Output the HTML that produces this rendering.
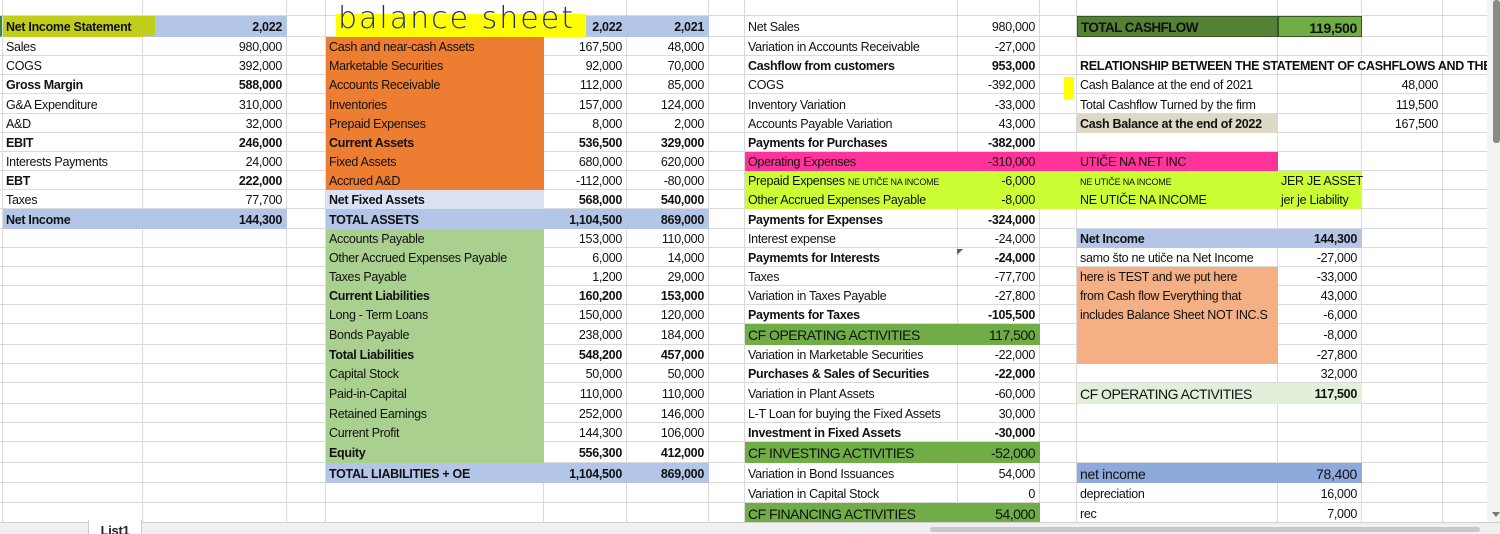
<!DOCTYPE html>
<html><head><meta charset="utf-8">
<style>
*{margin:0;padding:0;box-sizing:border-box}
body{width:1500px;height:534px;overflow:hidden;background:#fff;position:relative;font-family:"Liberation Sans",sans-serif;font-size:12.5px;letter-spacing:-0.3px;color:#111}
table{position:absolute;left:0;top:0;border-collapse:separate;border-spacing:0;table-layout:fixed;width:1487px}
td{border-right:1px solid #dadada;border-bottom:1px solid #dadada;white-space:nowrap;overflow:visible;padding:2px 3px 0 3px;vertical-align:middle;line-height:14px}
td.r{text-align:right;padding-right:4px}
.b{font-weight:bold}
.bl{background:#b4c6e7;border-color:#b4c6e7}
.lb{background:#d9e1f2;border-color:#d9e1f2}
.or{background:#ed7d31;border-color:#ed7d31}
.gr{background:#a9d08e;border-color:#a9d08e}
.pk{background:#ff3399;border-color:#ff3399}
.li{background:#ccff33;border-color:#ccff33}
.cf{background:#70ad47;border-color:#70ad47;font-size:14px;letter-spacing:-0.5px}
.dg{background:#548235;border:1px solid #375623;font-size:13.5px;font-weight:bold;letter-spacing:-0.6px;color:#111}
.lg2{background:#70ad47;border:1px solid #375623;font-size:14px;font-weight:bold}
.be{background:#ddd9c4;border-color:#ddd9c4}
.sa{background:#f4b084;border-color:#f4b084}
.pg{background:#e2efda;border-color:#e2efda}
.nb{background:#8ea9db;border-color:#8ea9db;font-size:14px}
.sm{font-size:9px;letter-spacing:-0.2px}
</style></head><body>
<table>
<colgroup><col style="width:3px"><col style="width:140px"><col style="width:144px"><col style="width:39px"><col style="width:218px"><col style="width:83px"><col style="width:82px"><col style="width:36px"><col style="width:213px"><col style="width:82px"><col style="width:37px"><col style="width:201px"><col style="width:84px"><col style="width:81px"><col style="width:45px"></colgroup>
<tr style="height:16px"><td style="padding:0"></td><td></td><td></td><td></td><td></td><td></td><td></td><td></td><td></td><td></td><td></td><td></td><td></td><td></td><td></td></tr>
<tr style="height:21px"><td style="padding:0;border-left:2px solid #3a8a3a"></td><td class="b" style="background:#c2cf1a;border-color:#c2cf1a">Net Income Statement</td><td class="bl b r" style="background:linear-gradient(to right,#c2cf1a 0 12px,#b4c6e7 12px)">2,022</td><td></td><td></td><td class="bl b r">2,022</td><td class="bl b r">2,021</td><td></td><td>Net Sales</td><td class="r">980,000</td><td></td><td class="dg">TOTAL CASHFLOW</td><td class="lg2 r">119,500</td><td></td><td></td></tr>
<tr style="height:19px"><td></td><td>Sales</td><td class="r">980,000</td><td></td><td class="or">Cash and near-cash Assets</td><td class="r">167,500</td><td class="r">48,000</td><td></td><td>Variation in Accounts Receivable</td><td class="r">-27,000</td><td></td><td></td><td></td><td></td><td></td></tr>
<tr style="height:19px"><td></td><td>COGS</td><td class="r">392,000</td><td></td><td class="or">Marketable Securities</td><td class="r">92,000</td><td class="r">70,000</td><td></td><td class="b">Cashflow from customers</td><td class="r b">953,000</td><td></td><td class="b">RELATIONSHIP BETWEEN THE STATEMENT OF CASHFLOWS AND THE</td><td></td><td></td><td></td></tr>
<tr style="height:19px"><td></td><td class="b">Gross Margin</td><td class="r b">588,000</td><td></td><td class="or">Accounts Receivable</td><td class="r">112,000</td><td class="r">85,000</td><td></td><td>COGS</td><td class="r">-392,000</td><td></td><td>Cash Balance at the end of 2021</td><td></td><td class="r">48,000</td><td></td></tr>
<tr style="height:20px"><td></td><td>G&amp;A Expenditure</td><td class="r">310,000</td><td></td><td class="or">Inventories</td><td class="r">157,000</td><td class="r">124,000</td><td></td><td>Inventory Variation</td><td class="r">-33,000</td><td></td><td>Total Cashflow Turned by the firm</td><td></td><td class="r">119,500</td><td></td></tr>
<tr style="height:19px"><td></td><td>A&amp;D</td><td class="r">32,000</td><td></td><td class="or">Prepaid Expenses</td><td class="r">8,000</td><td class="r">2,000</td><td></td><td>Accounts Payable Variation</td><td class="r">43,000</td><td></td><td class="be b">Cash Balance at the end of 2022</td><td></td><td class="r">167,500</td><td></td></tr>
<tr style="height:19px"><td></td><td class="b">EBIT</td><td class="r b">246,000</td><td></td><td class="or b">Current Assets</td><td class="r b">536,500</td><td class="r b">329,000</td><td></td><td class="b">Payments for Purchases</td><td class="r b">-382,000</td><td></td><td></td><td></td><td></td><td></td></tr>
<tr style="height:19px"><td></td><td>Interests Payments</td><td class="r">24,000</td><td></td><td class="or">Fixed Assets</td><td class="r">680,000</td><td class="r">620,000</td><td></td><td class="pk">Operating Expenses</td><td class="pk r">-310,000</td><td class="pk"></td><td class="pk">UTIČE NA NET INC</td><td></td><td></td><td></td></tr>
<tr style="height:19px"><td></td><td class="b">EBT</td><td class="r b">222,000</td><td></td><td class="or">Accrued A&amp;D</td><td class="r">-112,000</td><td class="r">-80,000</td><td></td><td class="li">Prepaid Expenses <span class="sm">NE UTIČE NA INCOME</span></td><td class="li r">-6,000</td><td class="li"></td><td class="li"><span class="sm">NE UTIČE NA INCOME</span></td><td class="li">JER JE ASSET</td><td></td><td></td></tr>
<tr style="height:19px"><td></td><td>Taxes</td><td class="r">77,700</td><td></td><td class="lb b">Net Fixed Assets</td><td class="r b">568,000</td><td class="r b">540,000</td><td></td><td class="li">Other Accrued Expenses Payable</td><td class="li r">-8,000</td><td class="li"></td><td class="li">NE UTIČE NA INCOME</td><td class="li">jer je Liability</td><td></td><td></td></tr>
<tr style="height:20px"><td></td><td class="bl b">Net Income</td><td class="bl b r">144,300</td><td></td><td class="bl b">TOTAL ASSETS</td><td class="bl b r">1,104,500</td><td class="bl b r">869,000</td><td></td><td class="b">Payments for Expenses</td><td class="r b">-324,000</td><td></td><td></td><td></td><td></td><td></td></tr>
<tr style="height:19px"><td></td><td></td><td></td><td></td><td class="gr">Accounts Payable</td><td class="r">153,000</td><td class="r">110,000</td><td></td><td>Interest expense</td><td class="r">-24,000</td><td></td><td class="bl b">Net Income</td><td class="bl b r">144,300</td><td></td><td></td></tr>
<tr style="height:19px"><td></td><td></td><td></td><td></td><td class="gr">Other Accrued Expenses Payable</td><td class="r">6,000</td><td class="r">14,000</td><td></td><td class="b">Paymemts for Interests</td><td class="r b">-24,000</td><td></td><td>samo što ne utiče na Net Income</td><td class="r">-27,000</td><td></td><td></td></tr>
<tr style="height:19px"><td></td><td></td><td></td><td></td><td class="gr">Taxes Payable</td><td class="r">1,200</td><td class="r">29,000</td><td></td><td>Taxes</td><td class="r">-77,700</td><td></td><td class="sa">here is TEST and we put here</td><td class="r">-33,000</td><td></td><td></td></tr>
<tr style="height:19px"><td></td><td></td><td></td><td></td><td class="gr b">Current Liabilities</td><td class="r b">160,200</td><td class="r b">153,000</td><td></td><td>Variation in Taxes Payable</td><td class="r">-27,800</td><td></td><td class="sa">from Cash flow Everything that</td><td class="r">43,000</td><td></td><td></td></tr>
<tr style="height:19px"><td></td><td></td><td></td><td></td><td class="gr">Long - Term Loans</td><td class="r">150,000</td><td class="r">120,000</td><td></td><td class="b">Payments for Taxes</td><td class="r b">-105,500</td><td></td><td class="sa">includes Balance Sheet NOT INC.S</td><td class="r">-6,000</td><td></td><td></td></tr>
<tr style="height:21px"><td></td><td></td><td></td><td></td><td class="gr">Bonds Payable</td><td class="r">238,000</td><td class="r">184,000</td><td></td><td class="cf">CF OPERATING ACTIVITIES</td><td class="cf r">117,500</td><td></td><td class="sa"></td><td class="r">-8,000</td><td></td><td></td></tr>
<tr style="height:19px"><td></td><td></td><td></td><td></td><td class="gr b">Total Liabilities</td><td class="r b">548,200</td><td class="r b">457,000</td><td></td><td>Variation in Marketable Securities</td><td class="r">-22,000</td><td></td><td class="sa"></td><td class="r">-27,800</td><td></td><td></td></tr>
<tr style="height:19px"><td></td><td></td><td></td><td></td><td class="gr">Capital Stock</td><td class="r">50,000</td><td class="r">50,000</td><td></td><td class="b">Purchases &amp; Sales of Securities</td><td class="r b">-22,000</td><td></td><td></td><td class="r">32,000</td><td></td><td></td></tr>
<tr style="height:21px"><td></td><td></td><td></td><td></td><td class="gr">Paid-in-Capital</td><td class="r">110,000</td><td class="r">110,000</td><td></td><td>Variation in Plant Assets</td><td class="r">-60,000</td><td></td><td class="pg" style="font-size:14px;letter-spacing:-0.5px">CF OPERATING ACTIVITIES</td><td class="pg r b">117,500</td><td></td><td></td></tr>
<tr style="height:19px"><td></td><td></td><td></td><td></td><td class="gr">Retained Earnings</td><td class="r">252,000</td><td class="r">146,000</td><td></td><td>L-T Loan for buying the Fixed Assets</td><td class="r">30,000</td><td></td><td></td><td></td><td></td><td></td></tr>
<tr style="height:19px"><td></td><td></td><td></td><td></td><td class="gr">Current Profit</td><td class="r">144,300</td><td class="r">106,000</td><td></td><td class="b">Investment in Fixed Assets</td><td class="r b">-30,000</td><td></td><td></td><td></td><td></td><td></td></tr>
<tr style="height:21px"><td></td><td></td><td></td><td></td><td class="gr b">Equity</td><td class="r b">556,300</td><td class="r b">412,000</td><td></td><td class="cf">CF INVESTING ACTIVITIES</td><td class="cf r">-52,000</td><td></td><td></td><td></td><td></td><td></td></tr>
<tr style="height:20px"><td></td><td></td><td></td><td></td><td class="bl b">TOTAL LIABILITIES + OE</td><td class="bl b r">1,104,500</td><td class="bl b r">869,000</td><td></td><td>Variation in Bond Issuances</td><td class="r">54,000</td><td></td><td class="nb">net income</td><td class="nb r">78,400</td><td></td><td></td></tr>
<tr style="height:20px"><td></td><td></td><td></td><td></td><td></td><td></td><td></td><td></td><td>Variation in Capital Stock</td><td class="r">0</td><td></td><td>depreciation</td><td class="r">16,000</td><td></td><td></td></tr>
<tr style="height:20px"><td></td><td></td><td></td><td></td><td></td><td></td><td></td><td></td><td class="cf">CF FINANCING ACTIVITIES</td><td class="cf r">54,000</td><td></td><td>rec</td><td class="r">7,000</td><td></td><td></td></tr>
</table>
<div style="position:absolute;left:336px;top:14px;width:250px;height:23px;background:#ffff00"></div>
<div style="position:absolute;left:338px;top:1px;line-height:36px;font-family:'DejaVu Sans',sans-serif;font-size:30px;letter-spacing:2px;color:#1c2d6b;font-weight:200">balance sheet</div>
<div style="position:absolute;left:1064px;top:77px;width:10px;height:22px;background:#ffff00"></div>
<div style="position:absolute;left:957px;top:249px;width:0;height:0;border-top:6px solid #2e7d32;border-right:6px solid transparent"></div>
<div style="position:absolute;left:0;top:522px;width:1500px;height:12px;background:#f0f0f0;border-top:1px solid #d0d0d0"></div>
<div style="position:absolute;left:88px;top:520px;width:54px;height:14px;background:#fff;border-left:1px solid #ccc;border-right:1px solid #ccc;font-size:13px;font-weight:bold;line-height:22px;text-align:center;overflow:hidden;color:#222">List1</div>
<div style="position:absolute;left:930px;top:527px;width:550px;height:5px;background:#c8c8c8;border-radius:3px"></div>
<div style="position:absolute;left:1487px;top:0;width:13px;height:522px;background:#f3f3f3"></div>
<div style="position:absolute;left:1493px;top:0;width:7px;height:143px;background:#8a8a8a;border-radius:3px"></div>
<div style="position:absolute;left:1492px;top:512px;width:0;height:0;border-left:4px solid transparent;border-right:4px solid transparent;border-top:5px solid #777"></div>
</body></html>
